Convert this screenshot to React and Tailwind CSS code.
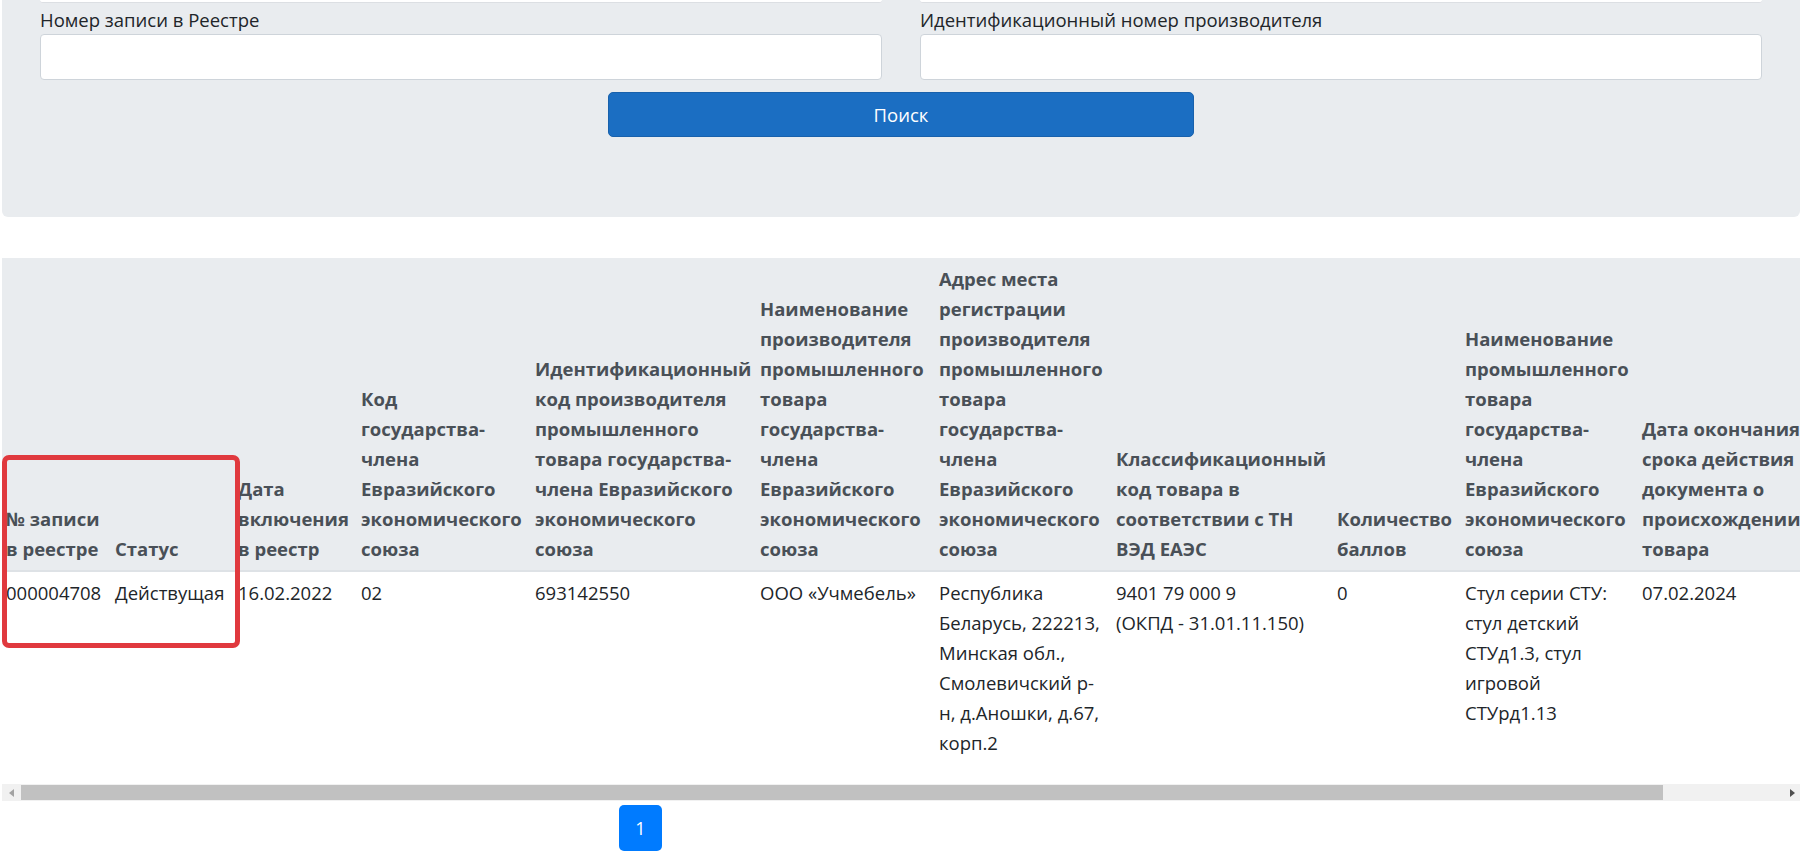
const columns = [
  { width: 107, head: ['№ записи', 'в реестре'], cell: ['000004708'], first: true },
  { width: 123, head: ['Статус'], cell: ['Действущая'] },
  { width: 123, head: ['Дата', 'включения', 'в реестр'], cell: ['16.02.2022'] },
  {
    width: 174,
    head: ['Код', 'государства-', 'члена', 'Евразийского', 'экономического', 'союза'],
    cell: ['02'],
  },
  {
    width: 225,
    head: [
      'Идентификационный',
      'код производителя',
      'промышленного',
      'товара государства-',
      'члена Евразийского',
      'экономического',
      'союза',
    ],
    cell: ['693142550'],
  },
  {
    width: 179,
    head: [
      'Наименование',
      'производителя',
      'промышленного',
      'товара',
      'государства-',
      'члена',
      'Евразийского',
      'экономического',
      'союза',
    ],
    cell: ['ООО «Учмебель»'],
  },
  {
    width: 177,
    head: [
      'Адрес места',
      'регистрации',
      'производителя',
      'промышленного',
      'товара',
      'государства-',
      'члена',
      'Евразийского',
      'экономического',
      'союза',
    ],
    cell: [
      'Республика',
      'Беларусь, 222213,',
      'Минская обл.,',
      'Смолевичский р-',
      'н, д.Аношки, д.67,',
      'корп.2',
    ],
  },
  {
    width: 221,
    head: ['Классификационный', 'код товара в', 'соответствии с ТН', 'ВЭД ЕАЭС'],
    cell: ['9401 79 000 9', '(ОКПД - 31.01.11.150)'],
  },
  { width: 128, head: ['Количество', 'баллов'], cell: ['0'] },
  {
    width: 177,
    head: [
      'Наименование',
      'промышленного',
      'товара',
      'государства-',
      'члена',
      'Евразийского',
      'экономического',
      'союза',
    ],
    cell: ['Стул серии СТУ:', 'стул детский', 'СТУд1.3, стул', 'игровой', 'СТУрд1.13'],
  },
  {
    width: 200,
    head: ['Дата окончания', 'срока действия', 'документа о', 'происхождении', 'товара'],
    cell: ['07.02.2024'],
  },
];

const Lines = ({ lines }) =>
  lines.map((line, i) => (
    <span key={i} className="block whitespace-nowrap">
      {line}
    </span>
  ));

const Field = ({ label }) => (
  <div>
    {/* bottom edge of the previous row's input */}
    <div className="h-[3px] bg-white border-b border-[#dcdfe3] rounded-b-sm" />
    <label className="block mt-[3px] leading-[28px] text-[18.5px] text-[#212529]">{label}</label>
    <input
      type="text"
      className="block w-full h-[46px] bg-white border border-[#ced4da] rounded-[4px] outline-none"
    />
  </div>
);

export default function App() {
  return (
    <div className="min-h-screen bg-white font-['Open_Sans',sans-serif] text-[#212529]">
      {/* Filter panel */}
      <div className="ml-[2px] w-[1798px] bg-[#e9ecef] rounded-b-md px-[38px] pb-[80px]">
        <div className="grid grid-cols-2 gap-x-[38px]">
          <Field label="Номер записи в Реестре" />
          <Field label="Идентификационный номер производителя" />
        </div>
        <div className="flex justify-center mt-[12px]">
          <button className="w-[586px] h-[45px] bg-[#1b6ec2] border border-[#1861ac] rounded-[5px] text-white text-[18.5px]">
            Поиск
          </button>
        </div>
      </div>

      {/* Results table */}
      <div className="relative ml-[2px] w-[1798px] mt-[41px] overflow-hidden">
        <table className="table-fixed border-collapse mb-[20px]" style={{ width: 1834 }}>
          <colgroup>
            {columns.map((c, i) => (
              <col key={i} style={{ width: c.width }} />
            ))}
          </colgroup>
          <thead>
            <tr className="bg-[#e9ecef] border-b-2 border-[#dee2e6]">
              {columns.map((c, i) => (
                <th
                  key={i}
                  className={`align-bottom text-left font-bold text-[#495057] text-[18.5px] leading-[30px] py-[6px] pr-[6px] ${
                    c.first ? 'pl-[4px]' : 'pl-[6px]'
                  }`}
                >
                  <Lines lines={c.head} />
                </th>
              ))}
            </tr>
          </thead>
          <tbody>
            <tr className="bg-white">
              {columns.map((c, i) => (
                <td
                  key={i}
                  className={`align-top text-left text-[18.5px] leading-[30px] py-[6px] pr-[6px] ${
                    c.first ? 'pl-[4px]' : 'pl-[6px]'
                  }`}
                >
                  <Lines lines={c.cell} />
                </td>
              ))}
            </tr>
          </tbody>
        </table>

        {/* highlight annotation */}
        <div className="absolute left-0 top-[197px] w-[238px] h-[193px] border-[5px] border-[#e0393e] rounded-[7px] pointer-events-none" />

        {/* horizontal scrollbar */}
        <div className="flex items-center h-[17px] bg-[#f1f1f1]">
          <div className="w-[19px] h-full flex items-center justify-center">
            <svg width="6" height="8" viewBox="0 0 6 8">
              <path d="M5 0 L0 4 L5 8 Z" fill="#a3a3a3" />
            </svg>
          </div>
          <div className="w-[1642px] h-[15px] bg-[#c1c1c1]" />
          <div className="flex-1" />
          <div className="w-[17px] h-full flex items-center justify-center">
            <svg width="6" height="8" viewBox="0 0 6 8">
              <path d="M1 0 L6 4 L1 8 Z" fill="#505050" />
            </svg>
          </div>
        </div>
      </div>

      {/* Pagination */}
      <div className="ml-[619px] mt-[4px] flex">
        <button className="w-[43px] h-[46px] bg-[#007bff] rounded-[5px] text-white text-[18px]">1</button>
      </div>
    </div>
  );
}
